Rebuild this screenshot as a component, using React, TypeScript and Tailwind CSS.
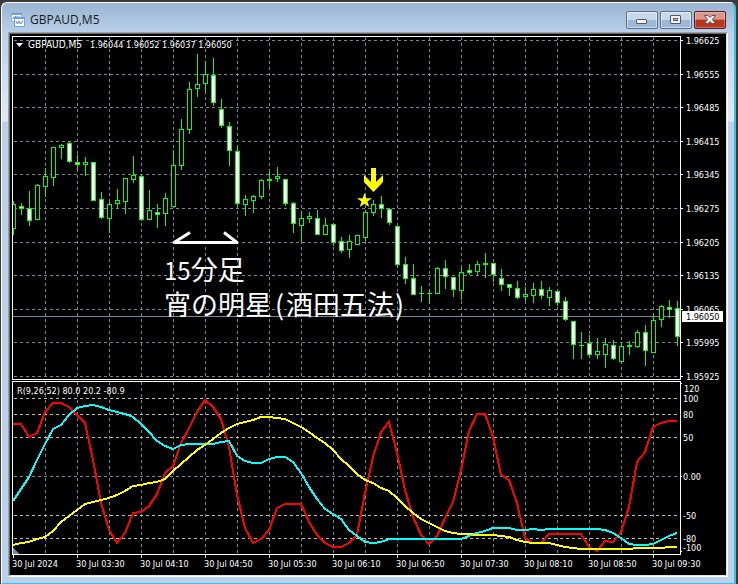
import React from "react";

type Candle = {
  high: number;
  top: number;
  bottom: number;
  low: number;
  bear: boolean;
};

const FIRST_X = 13;
const STEP = 8;

// high, body top, body bottom, low, 1 = closed lower
const rawCandles = [
  [201, 204, 228, 234, 0],
  [203, 206, 208, 214, 1],
  [191, 208, 220, 225, 1],
  [184, 185, 219, 219, 0],
  [168, 176, 186, 196, 0],
  [147, 147, 177, 185, 0],
  [144, 145, 147, 158, 0],
  [142, 143, 161, 162, 1],
  [155, 162, 164, 170, 1],
  [157, 162, 164, 175, 0],
  [162, 162, 200, 200, 1],
  [192, 199, 217, 218, 1],
  [202, 204, 218, 232, 0],
  [189, 200, 203, 207, 0],
  [178, 178, 201, 213, 0],
  [156, 175, 179, 182, 0],
  [175, 176, 219, 220, 1],
  [190, 210, 219, 219, 0],
  [204, 212, 214, 227, 1],
  [193, 198, 213, 225, 0],
  [150, 165, 206, 206, 0],
  [119, 129, 165, 169, 0],
  [82, 89, 129, 133, 0],
  [54, 84, 88, 96, 0],
  [61, 74, 83, 91, 0],
  [58, 75, 102, 105, 1],
  [99, 109, 125, 127, 1],
  [122, 126, 150, 165, 1],
  [146, 151, 203, 206, 1],
  [195, 199, 204, 215, 0],
  [195, 196, 200, 212, 0],
  [179, 180, 196, 198, 0],
  [171, 179, 180, 187, 0],
  [167, 176, 178, 181, 0],
  [179, 179, 203, 205, 1],
  [202, 203, 223, 232, 1],
  [211, 218, 225, 241, 0],
  [212, 216, 218, 222, 0],
  [210, 218, 234, 234, 1],
  [218, 225, 234, 234, 0],
  [223, 224, 242, 245, 1],
  [237, 241, 250, 252, 1],
  [235, 241, 249, 257, 0],
  [235, 235, 244, 244, 0],
  [210, 212, 237, 240, 0],
  [200, 204, 212, 215, 0],
  [196, 204, 208, 217, 1],
  [208, 209, 222, 224, 1],
  [226, 226, 264, 266, 1],
  [257, 264, 278, 283, 1],
  [264, 278, 294, 294, 1],
  [286, 293, 293, 301, 0],
  [290, 293, 293, 303, 0],
  [267, 268, 293, 293, 0],
  [260, 268, 276, 288, 1],
  [277, 277, 289, 296, 1],
  [267, 272, 290, 299, 0],
  [264, 270, 272, 274, 1],
  [261, 264, 271, 274, 0],
  [253, 263, 264, 277, 0],
  [263, 263, 274, 281, 1],
  [269, 278, 284, 290, 1],
  [284, 284, 287, 295, 1],
  [281, 288, 297, 298, 1],
  [287, 294, 296, 300, 0],
  [283, 289, 295, 302, 0],
  [281, 289, 295, 298, 1],
  [287, 290, 297, 305, 0],
  [291, 291, 302, 305, 1],
  [297, 301, 319, 320, 1],
  [321, 321, 344, 358, 1],
  [332, 345, 345, 358, 0],
  [335, 343, 354, 357, 1],
  [338, 351, 354, 358, 0],
  [338, 344, 354, 367, 0],
  [340, 345, 358, 359, 1],
  [343, 346, 361, 363, 0],
  [341, 345, 346, 354, 0],
  [330, 332, 346, 347, 0],
  [325, 332, 350, 365, 1],
  [314, 320, 352, 352, 0],
  [305, 306, 319, 326, 0],
  [300, 307, 309, 317, 1],
  [301, 308, 336, 345, 1],
];

const candles: Candle[] = rawCandles.map(([high, top, bottom, low, bear]) => ({
  high,
  top,
  bottom,
  low,
  bear: bear === 1,
}));

// Williams %R lines, one value per bar
const fast = [
  424, 424, 437, 433, 412, 403, 403, 407, 415, 423, 460, 503, 530, 543, 533,
  513, 512, 506, 494, 473, 466, 443, 428, 412, 400, 407, 419, 447, 495, 528,
  543, 539, 530, 508, 504, 504, 504, 522, 535, 543, 547, 547, 543, 535, 493,
  457, 432, 422, 453, 490, 517, 535, 544, 536, 518, 502, 470, 431, 414, 414,
  437, 475, 480, 503, 538, 543, 543, 534, 534, 534, 534, 534, 547, 551, 541,
  542, 532, 507, 462, 452, 427, 423, 421, 421,
];
const middle = [
  501, 489, 477, 460, 444, 429, 425, 415, 408, 406, 405, 407, 410, 412, 414,
  417, 424, 432, 441, 446, 449, 445, 444, 444, 444, 444, 442, 441, 456, 461,
  463, 463, 459, 457, 457, 462, 473, 487, 499, 509, 514, 519, 530, 536, 542,
  543, 542, 539, 539, 539, 539, 539, 539, 539, 539, 539, 539, 536, 533, 531,
  528, 528, 528, 530, 530, 529, 530, 529, 529, 529, 529, 529, 529, 529, 530,
  533, 538, 544, 545, 545, 544, 540, 536, 533,
];
const slow = [
  545, 543, 542, 539, 537, 531, 522, 516, 510, 504, 502, 500, 498, 495, 491,
  486, 485, 483, 482, 479, 471, 464, 457, 450, 445, 439, 433, 428, 424, 422,
  420, 417, 417, 418, 419, 423, 427, 432, 438, 443, 450, 459, 466, 474, 480,
  483, 488, 491, 498, 506, 513, 519, 523, 527, 531, 533, 534, 534, 535, 535,
  535, 536, 537, 540, 542, 543, 543, 543, 545, 547, 548, 549, 549, 549, 549,
  549, 549, 549, 548, 548, 548, 548, 547, 547,
];

const prices = [
  { label: "1.96625", y: 40 },
  { label: "1.96555", y: 74 },
  { label: "1.96485", y: 107 },
  { label: "1.96415", y: 141 },
  { label: "1.96345", y: 174 },
  { label: "1.96275", y: 208 },
  { label: "1.96205", y: 242 },
  { label: "1.96135", y: 275 },
  { label: "1.96065", y: 309 },
  { label: "1.95995", y: 342 },
  { label: "1.95925", y: 376 },
];

const levels = [
  { label: "100", y: 398 },
  { label: "80", y: 414 },
  { label: "50", y: 437 },
  { label: "-50", y: 515 },
  { label: "-80", y: 538 },
];

const times = [
  "30 Jul 2024",
  "30 Jul 03:30",
  "30 Jul 04:10",
  "30 Jul 04:50",
  "30 Jul 05:30",
  "30 Jul 06:10",
  "30 Jul 06:50",
  "30 Jul 07:30",
  "30 Jul 08:10",
  "30 Jul 08:50",
  "30 Jul 09:30",
];

const gridColumns = Array.from({ length: 20 }, (_, i) => 45 + i * 32);

const toPoints = (values: number[]) =>
  values.map((y, i) => `${FIRST_X + i * STEP},${y}`).join(" ");

const CandleShape = ({ candle, x }: { candle: Candle; x: number }) => {
  const bodyHeight = candle.bottom - candle.top + 1;
  return (
    <g>
      <rect
        x={x}
        y={candle.high}
        width={1}
        height={candle.low - candle.high + 1}
        fill="#00ff00"
      />
      <rect
        x={x - 2}
        y={candle.top}
        width={5}
        height={bodyHeight}
        fill="#00ff00"
      />
      {bodyHeight > 2 && (
        <rect
          x={x - 1}
          y={candle.top + 1}
          width={3}
          height={bodyHeight - 2}
          fill={candle.bear ? "#ffffff" : "#000000"}
        />
      )}
    </g>
  );
};

const Chart = () => (
  <svg
    viewBox="10 34 716 541"
    className="block h-auto w-full bg-black font-['DejaVu_Sans_Condensed','DejaVu_Sans',sans-serif] text-[9px]"
    role="img"
    aria-label="GBPAUD five minute chart"
  >
    <defs>
      <clipPath id="plot">
        <rect x={13} y={37} width={667} height={517} />
      </clipPath>
    </defs>

    <g shapeRendering="crispEdges">
      {/* grid */}
      <g stroke="#778899" strokeDasharray="3 3">
        {gridColumns.map((x) => (
          <path key={x} d={`M${x + 0.5} 37V379M${x + 0.5} 382V554`} />
        ))}
        {prices.map((p) => (
          <path key={p.y} d={`M14 ${p.y + 0.5}H680`} />
        ))}
        <path d="M14 476.5H680" />
      </g>
      <g stroke="#c0c0c0" strokeDasharray="3 3">
        {levels.map((l) => (
          <path key={l.y} d={`M14 ${l.y + 0.5}H680`} />
        ))}
      </g>
      <path d="M13 316.5H680" stroke="#778899" />
      <path d="M13 548V554H19Z" fill="#778899" />

      <g clipPath="url(#plot)">
        {candles.map((c, i) => (
          <CandleShape key={i} candle={c} x={FIRST_X + i * STEP} />
        ))}
        <g fill="none" strokeWidth={2}>
          <polyline points={toPoints(fast)} stroke="#ff0000" />
          <polyline points={toPoints(middle)} stroke="#00ffff" />
          <polyline points={toPoints(slow)} stroke="#ffff00" />
        </g>
      </g>

      {/* frames and ticks */}
      <g fill="none" stroke="#ffffff">
        <path d="M12.5 36.5H680.5V379.5H12.5Z" />
        <path d="M12.5 381.5H680.5V554.5H12.5Z" />
        {prices.map((p) => (
          <path key={p.y} d={`M681 ${p.y + 0.5}h2`} />
        ))}
        <path d="M681 383.5h1M681 476.5h1M681 551.5h1" />
        {times.map((t, i) => (
          <path key={t} d={`M${13.5 + i * 64} 555v3`} />
        ))}
      </g>
    </g>

    <g fill="#ffffff">
      <path d="M16 43H23L19.5 47Z" />
      <text x={28} y={48} className="text-[10px]">
        GBPAUD,M5
      </text>
      <text x={90} y={48}>
        1.96044 1.96052 1.96037 1.96050
      </text>
      <text x={17} y={394}>
        R(9,26,52) 80.0 20.2 -80.9
      </text>
      {prices.map((p) => (
        <text key={p.label} x={686} y={p.y + 4}>
          {p.label}
        </text>
      ))}
      <text x={684} y={392}>
        120
      </text>
      {levels.map((l) => (
        <text key={l.label} x={683} y={l.y + 4}>
          {l.label}
        </text>
      ))}
      <text x={683} y={480}>
        0.00
      </text>
      <text x={683} y={551}>
        -100
      </text>
      {times.map((t, i) => (
        <text key={t} x={12 + i * 64} y={567}>
          {t}
        </text>
      ))}
      <rect x={682} y={311} width={41} height={11} />
      <text x={686} y={320} fill="#000000">
        1.96050
      </text>
    </g>

    {/* evening star marks */}
    <path
      d="M371 168H376V182L383 175V182L373.5 192L364 182V175L371 182Z"
      fill="#ffff00"
    />
    <path
      d="M364.5 193L366.3 198.2H372L367.5 201.4L369.2 207L364.5 203.7L359.8 207L361.5 201.4L357 198.2H362.7Z"
      fill="#ffff00"
    />
    <path
      d="M190 232.5L174 242.5H237L224 232.5"
      fill="none"
      stroke="#ffffff"
      strokeWidth={3}
      strokeLinejoin="round"
    />
    <g
      fill="#ffffff"
      className="font-['Noto_Sans_CJK_JP',sans-serif] text-[27px]"
    >
      <text x={164} y={280}>
        <tspan className="text-2xl">15</tspan>分足
      </text>
      <text y={315}>
        <tspan x={164}>宵の明星</tspan>
        <tspan x={275}>(</tspan>
        <tspan x={286}>酒田五法</tspan>
        <tspan x={395}>)</tspan>
      </text>
    </g>
  </svg>
);

const WindowIcon = () => (
  <svg viewBox="0 0 14 14" className="size-3.5" aria-hidden="true">
    <rect x="0.5" y="0.5" width="10" height="8" fill="#fff" stroke="#8bb4ea" />
    <path d="M0 1H11" stroke="#6d9fe4" strokeWidth="2" />
    <path d="M1.5 5.5H2.5L3 3.5M4.5 3V4.5M6 4V3M8 4V3" fill="none" stroke="#5b8fdc" />
    <rect x="3.5" y="4.5" width="10" height="9" fill="#fff" stroke="#6d9fe4" />
    <path d="M3 5H14" stroke="#6d9fe4" strokeWidth="2" />
    <path
      d="M5 8L6.5 11L8 8L9.5 11L12 7.5"
      fill="none"
      stroke="#4a7fd0"
    />
  </svg>
);

const captionButton =
  "flex h-[18px] w-8 items-center justify-center rounded-[2px] border border-[#5c6c84] bg-linear-to-b from-[#c6d8ec] from-50% to-[#9db8d6] to-50% inset-ring inset-ring-white/50";

const App = () => {
  return (
    <main className="min-h-screen bg-[#3a3a3a] pt-[2px] pr-[2px] pl-px">
      <div className="rounded-t-md border-t border-r-2 border-b border-l border-t-white border-r-[#35c5e0] border-b-[#35c5e0] border-l-white bg-[linear-gradient(#99b4d1_0,#b9d1ea_30px,#e0eaf6_118px,#b9d1ea_119px)] px-1.5 pb-1.5">
        <header className="flex h-[29px] items-center gap-[5px] pt-1 pr-[2px] pl-[3px]">
          <WindowIcon />
          <h1 className="flex-1 font-['Open_Sans','Noto_Sans',sans-serif] text-xs text-[#1a1a1a]">
            GBPAUD,M5
          </h1>
          <div className="flex gap-[2px]">
            <button type="button" aria-label="Minimize" className={captionButton}>
              <svg viewBox="0 0 12 10" className="h-2.5 w-3">
                <rect
                  x="0.5"
                  y="4.5"
                  width="10"
                  height="4"
                  rx="0.5"
                  fill="#f4f4f4"
                  stroke="#535666"
                />
              </svg>
            </button>
            <button type="button" aria-label="Maximize" className={captionButton}>
              <svg viewBox="0 0 12 10" className="h-2.5 w-3">
                <rect
                  x="0.5"
                  y="0.5"
                  width="10"
                  height="8"
                  rx="0.5"
                  fill="#f4f4f4"
                  stroke="#535666"
                />
                <rect
                  x="3.5"
                  y="3.5"
                  width="4"
                  height="2"
                  fill="#b5cbe3"
                  stroke="#535666"
                />
              </svg>
            </button>
            <button
              type="button"
              aria-label="Close"
              className="flex h-[18px] w-8 items-center justify-center rounded-[2px] border border-[#5a1820] bg-linear-to-b from-[#dd9587] from-45% to-[#b8341c] to-50% inset-ring inset-ring-white/30"
            >
              <svg viewBox="0 0 12 10" className="h-2.5 w-3">
                <path
                  d="M0.5 0.5H4L6 2.5L8 0.5H11.5L8.3 4.5L11.5 8.5H8L6 6.5L4 8.5H0.5L3.7 4.5Z"
                  fill="#f4f4f4"
                  stroke="#535666"
                />
              </svg>
            </button>
          </div>
        </header>
        <div className="border border-t-[#a0a0a0] border-r-white border-b-white border-l-[#a0a0a0]">
          <div className="border border-t-[#696969] border-r-[#e3e3e3] border-b-[#e3e3e3] border-l-[#696969]">
            <Chart />
          </div>
        </div>
      </div>
    </main>
  );
};

export default App;
